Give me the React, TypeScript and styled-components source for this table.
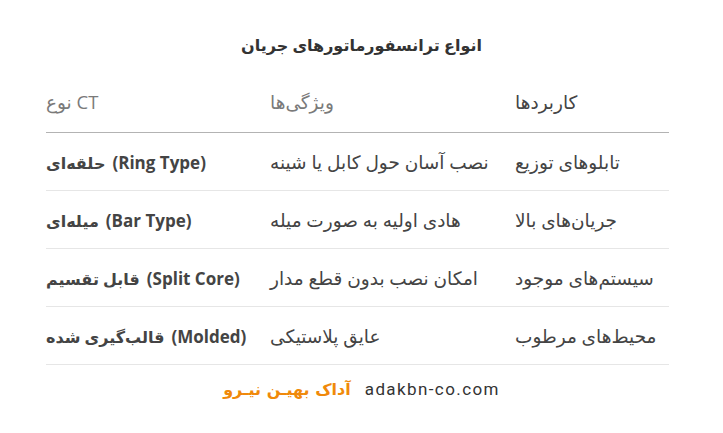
import React from "react";
import styled, { createGlobalStyle } from "styled-components";

const GlobalStyle = createGlobalStyle`
  body {
    margin: 0;
    background: #ffffff;
    font-family: "Open Sans", "DejaVu Sans", sans-serif;
  }
`;

const Page = styled.div`
  width: 723px;
  height: 433px;
  display: flex;
  flex-direction: column;
  align-items: center;
  padding-top: 30px;
  box-sizing: border-box;
`;

const Title = styled.h2`
  margin: 0;
  font-size: 16px;
  font-weight: bold;
  color: #333333;
  direction: rtl;
  line-height: 30px;
`;

const Table = styled.table`
  width: 623px;
  margin: 12px 8px 0 0;
  border-collapse: collapse;
  direction: ltr;
  color: #444444;
  font-size: 18.5px;
`;

const HeadCell = styled.th<{ $dark?: boolean; $width: number }>`
  width: ${(p) => p.$width}px;
  height: 58px;
  padding: 0 0 2px 0;
  text-align: left;
  vertical-align: middle;
  font-weight: normal;
  color: ${(p) => (p.$dark ? "#444444" : "#7a7a7a")};
  border-bottom: 1.5px solid #b3b3b3;
`;

const Row = styled.tr`
  border-bottom: 1px solid #e6e6e6;
`;

const Cell = styled.td`
  height: 57px;
  padding: 0;
  text-align: left;
  vertical-align: middle;
  color: #444444;
  white-space: nowrap;
`;

const TypeName = styled.span`
  font-weight: bold;
  font-size: 16px;
  margin-right: 7px;
`;

const TypeLatin = styled.span`
  font-weight: bold;
  font-size: 17px;
`;

const Footer = styled.div`
  margin-top: 14px;
  display: flex;
  align-items: center;
  gap: 14px;
  direction: ltr;
`;

const Brand = styled.span`
  color: #f0890a;
  font-weight: bold;
  font-size: 16px;
  font-family: "DejaVu Sans", sans-serif;
`;

const Domain = styled.span`
  color: #333333;
  font-size: 17px;
  letter-spacing: 1.4px;
  font-family: Roboto, sans-serif;
`;

const rows = [
  { fa: "حلقه‌ای", en: "Ring Type", feature: "نصب آسان حول کابل یا شینه", use: "تابلوهای توزیع" },
  { fa: "میله‌ای", en: "Bar Type", feature: "هادی اولیه به صورت میله", use: "جریان‌های بالا" },
  { fa: "قابل تقسیم", en: "Split Core", feature: "امکان نصب بدون قطع مدار", use: "سیستم‌های موجود" },
  { fa: "قالب‌گیری شده", en: "Molded", feature: "عایق پلاستیکی", use: "محیط‌های مرطوب" },
];

const App = () => {
  return (
    <>
      <GlobalStyle />
      <Page>
        <Title>انواع ترانسفورماتورهای جریان</Title>
        <Table>
          <thead>
            <tr>
              <HeadCell $width={224}>نوع CT</HeadCell>
              <HeadCell $width={245}>ویژگی‌ها</HeadCell>
              <HeadCell $width={154} $dark>
                کاربردها
              </HeadCell>
            </tr>
          </thead>
          <tbody>
            {rows.map((r) => (
              <Row key={r.en}>
                <Cell>
                  <TypeName>{r.fa}</TypeName>
                  <TypeLatin>({r.en})</TypeLatin>
                </Cell>
                <Cell>{r.feature}</Cell>
                <Cell>{r.use}</Cell>
              </Row>
            ))}
          </tbody>
        </Table>
        <Footer>
          <Brand>آداک بهیـن نیـرو</Brand>
          <Domain>adakbn-co.com</Domain>
        </Footer>
      </Page>
    </>
  );
};

export default App;
